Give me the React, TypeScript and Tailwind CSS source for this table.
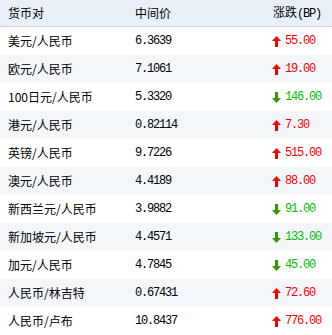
import React from 'react';

type Row = { pair: string; mid: string; change: string; up: boolean };

const rows: Row[] = [
  { pair: '美元/人民币', mid: '6.3639', change: '55.00', up: true },
  { pair: '欧元/人民币', mid: '7.1061', change: '19.00', up: true },
  { pair: '100日元/人民币', mid: '5.3320', change: '146.00', up: false },
  { pair: '港元/人民币', mid: '0.82114', change: '7.30', up: true },
  { pair: '英镑/人民币', mid: '9.7226', change: '515.00', up: true },
  { pair: '澳元/人民币', mid: '4.4189', change: '88.00', up: true },
  { pair: '新西兰元/人民币', mid: '3.9882', change: '91.00', up: false },
  { pair: '新加坡元/人民币', mid: '4.4571', change: '133.00', up: false },
  { pair: '加元/人民币', mid: '4.7845', change: '45.00', up: false },
  { pair: '人民币/林吉特', mid: '0.67431', change: '72.60', up: true },
  { pair: '人民币/卢布', mid: '10.8437', change: '776.00', up: true },
];

const cjk = "font-['Noto_Sans_CJK_SC',sans-serif]";
const mono = "font-['Liberation_Mono',monospace] tracking-[-1.2px]";

const Arrow: React.FC<{ up: boolean }> = ({ up }) => (
  <svg width="9" height="11" viewBox="0 0 9 11" className={up ? '' : 'rotate-180'}>
    <path d="M4.5 0 L9 5 L6 5 L6 11 L3 11 L3 5 L0 5 Z" fill={up ? '#ff0000' : '#339900'} />
  </svg>
);

export default function App() {
  return (
    <div className="w-[332px] h-[335px] bg-white text-[12px] text-black overflow-hidden">
      <div className={`grid grid-cols-[135px_137px_1fr] h-[27px] items-center bg-[#e9f0f8] border-b border-dotted border-[#a8c4e6] ${cjk}`}>
        <span className="pl-2">货币对</span>
        <span>中间价</span>
        <span className="pl-px">涨跌<span className={mono}>(BP)</span></span>
      </div>
      {rows.map((r, i) => (
        <div
          key={i}
          className={`grid grid-cols-[135px_137px_1fr] h-[28px] items-center ${i % 2 === 1 ? 'bg-[#f3f7fc]' : 'bg-white'}`}
        >
          <span className={`pl-2 ${cjk}`}>{r.pair}</span>
          <span className={mono}>{r.mid}</span>
          <span className="flex items-center gap-[4px]">
            <Arrow up={r.up} />
            <span className={`${mono} ${r.up ? 'text-[#ff0000]' : 'text-[#00c000]'}`}>{r.change}</span>
          </span>
        </div>
      ))}
    </div>
  );
}
